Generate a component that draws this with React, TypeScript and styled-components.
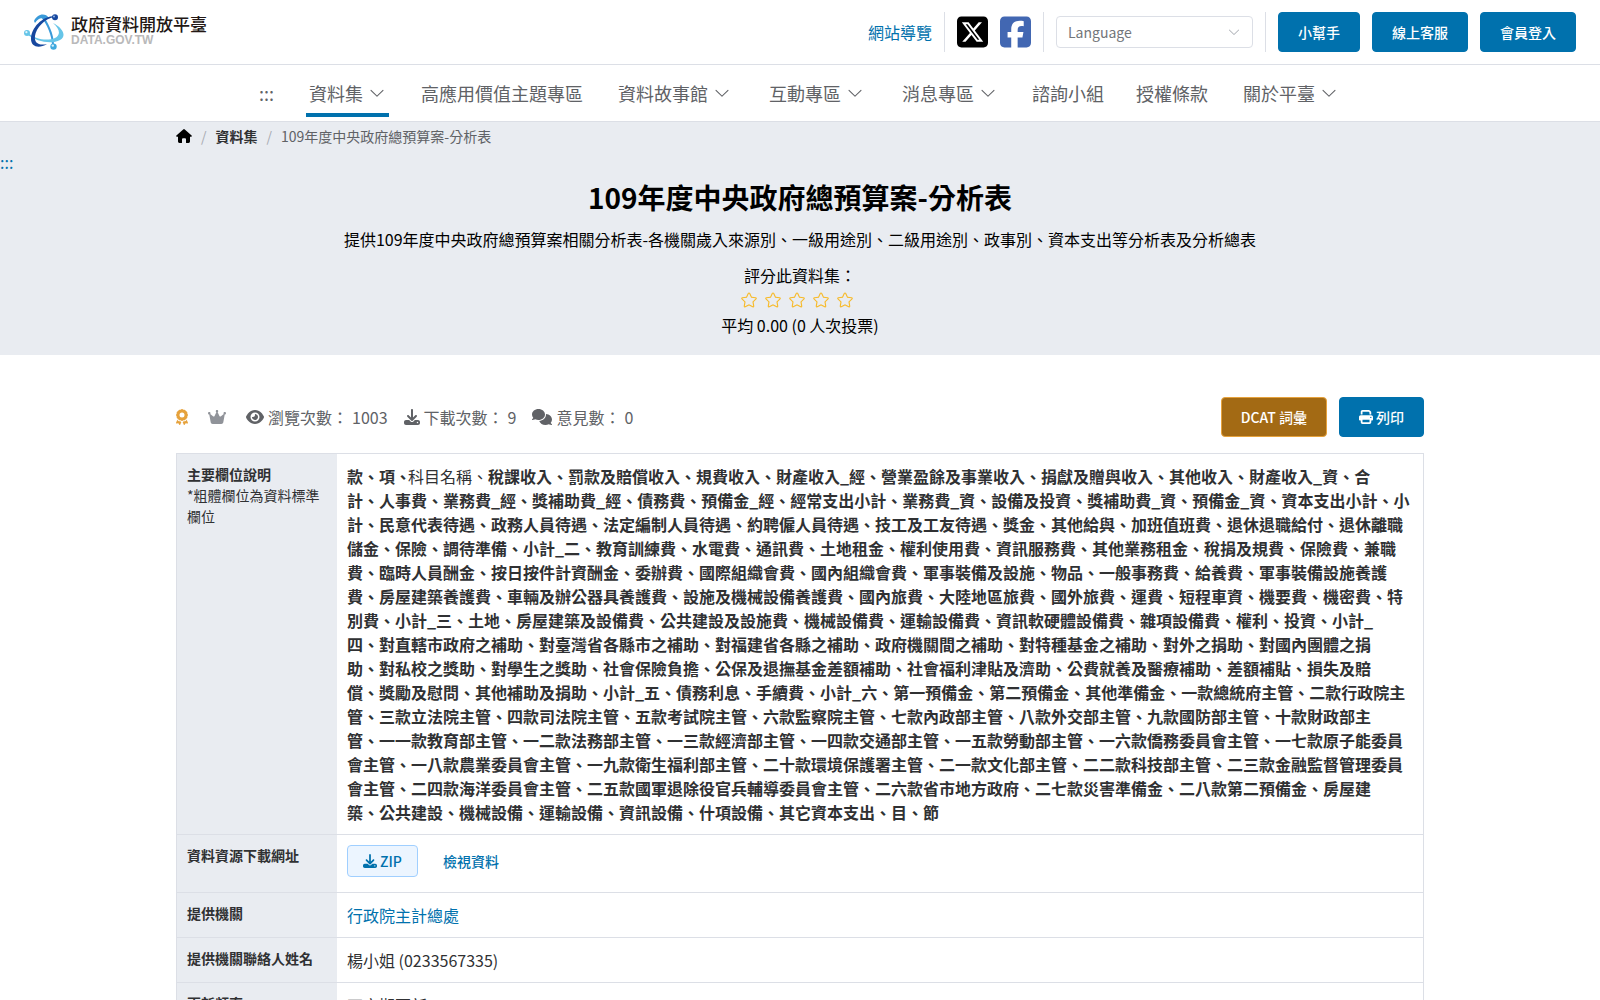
import React from 'react';
import styled, { createGlobalStyle, css } from 'styled-components';
import {
  FaSquareXTwitter,
  FaSquareFacebook,
  FaAward,
  FaCrown,
  FaEye,
  FaDownload,
  FaComments,
  FaPrint,
} from 'react-icons/fa6';

const color = {
  primary: '#0071ad',
  border: '#dcdfe6',
  panel: '#e9ecf1',
  text: '#303133',
  muted: '#606266',
  faint: '#909399',
  warning: '#e6a23c',
};

const GlobalStyle = createGlobalStyle`
  *, *::before, *::after { box-sizing: border-box; }
  body {
    margin: 0;
    background: #fff;
    color: #000;
    font: 16px/24px "Noto Sans CJK TC", "Noto Sans", sans-serif;
  }
  a { color: ${color.primary}; text-decoration: none; }
  button, select { font-family: inherit; cursor: pointer; }
  svg { display: block; flex: none; }
`;

const Page = styled.div`
  height: 100vh;
  overflow: hidden;
`;

const Header = styled.header`
  display: flex;
  align-items: center;
  justify-content: space-between;
  height: 65px;
  padding: 0 24px;
  border-bottom: 1px solid ${color.border};
`;

const Logo = styled.a`
  display: flex;
  align-items: center;
  gap: 6px;
`;

const LogoText = styled.span`
  display: flex;
  flex-direction: column;
  padding-bottom: 3px;
`;

const LogoName = styled.span`
  font-size: 17px;
  line-height: 18px;
  font-weight: 500;
  color: #231815;
`;

const LogoDomain = styled.span`
  font: bold 12px/14px "Liberation Sans", Arial, sans-serif;
  color: #b9b9ba;
`;

const Tools = styled.div`
  display: flex;
  align-items: center;
  gap: 12px;
`;

const Divider = styled.span`
  width: 1px;
  height: 40px;
  background: ${color.border};
`;

const SocialLink = styled.a<{ $tint: string }>`
  color: ${(p) => p.$tint};
  svg { width: 31px; height: 36px; }
`;

const SelectBox = styled.label`
  position: relative;
  display: block;
  svg {
    position: absolute;
    right: 12px;
    top: 9px;
    pointer-events: none;
    color: #a8abb2;
  }
`;

const LanguageSelect = styled.select`
  display: block;
  width: 197px;
  height: 32px;
  padding: 0 30px 0 11px;
  appearance: none;
  border: 1px solid ${color.border};
  border-radius: 4px;
  background: #fff;
  font-size: 14px;
  color: #73767a;
`;

const buttonKinds = {
  primary: css`
    background: ${color.primary};
    border-color: ${color.primary};
    color: #fff;
  `,
  warning: css`
    background: #a36a14;
    border-color: ${color.warning};
    color: #fff;
  `,
  plain: css`
    height: 32px;
    padding: 0 15px;
    background: #ecf5ff;
    border-color: #a0cfff;
    color: ${color.primary};
  `,
  text: css`
    height: 32px;
    padding: 0 15px;
    background: transparent;
    border-color: transparent;
    color: ${color.primary};
  `,
};

const Button = styled.button<{ $kind: keyof typeof buttonKinds }>`
  display: inline-flex;
  align-items: center;
  justify-content: center;
  gap: 3px;
  height: 40px;
  padding: 0 19px;
  border: 1px solid;
  border-radius: 4px;
  font-size: 14px;
  font-weight: 500;
  line-height: 14px;
  ${(p) => buttonKinds[p.$kind]}
`;

const Nav = styled.nav`
  display: flex;
  align-items: flex-start;
  justify-content: center;
  gap: 32px;
  height: 57px;
  padding-top: 15px;
  border-bottom: 1px solid ${color.border};
`;

const NavLink = styled.a<{ $menu?: boolean; $active?: boolean }>`
  display: flex;
  align-items: center;
  gap: 5px;
  height: 37px;
  padding: 0 ${(p) => (p.$menu ? '3px' : '0')} 7px;
  border-bottom: 4px solid ${(p) => (p.$active ? color.primary : 'transparent')};
  font-size: 18px;
  line-height: 26px;
  color: ${color.muted};
`;

const Hero = styled.section`
  padding-bottom: 18px;
  background: ${color.panel};
`;

const Container = styled.div`
  width: 78%;
  margin: 0 auto;
`;

const Breadcrumb = styled.nav`
  display: flex;
  align-items: center;
  gap: 9px;
  height: 28px;
  font-size: 14px;
  color: ${color.muted};
`;

const Slash = styled.span`
  color: #a8abb2;
`;

const CrumbLink = styled.a`
  font-weight: 700;
  color: ${color.text};
`;

const SkipLink = styled.a`
  display: block;
  width: max-content;
`;

const Intro = styled.div`
  display: flex;
  flex-direction: column;
  align-items: center;
  text-align: center;
`;

const Title = styled.h1`
  margin: 2px 0 9px;
  font-size: 28px;
  line-height: 42px;
  font-weight: 700;
`;

const Summary = styled.p`
  margin: 0 0 12px;
`;

const Stars = styled.div`
  display: flex;
  margin: 1px 0;
`;

const StarButton = styled.button`
  width: 24px;
  height: 24px;
  padding: 3px 6px 3px 0;
  border: 0;
  background: none;
  color: #f7ba2a;
`;

const Toolbar = styled.div`
  display: flex;
  align-items: center;
  justify-content: space-between;
  padding: 42px 0 16px;
`;

const Stats = styled.div`
  display: flex;
  align-items: center;
  gap: 16px;
  color: ${color.muted};
`;

const Marks = styled.div`
  display: flex;
  align-items: center;
  gap: 20px;
  margin-right: 4px;
`;

const Stat = styled.span`
  display: flex;
  align-items: center;
  gap: 4px;
`;

const IconBox = styled.span<{ $w: number; $tint?: string }>`
  color: ${(p) => p.$tint || 'inherit'};
  svg { width: ${(p) => p.$w}px; height: 16px; }
`;

const Actions = styled.div`
  display: flex;
  gap: 12px;
`;

const Table = styled.table`
  width: 100%;
  border: 1px solid ${color.border};
  border-spacing: 0;
  color: ${color.text};
  th, td {
    padding: 10px;
    border-bottom: 1px solid ${color.border};
    text-align: left;
    vertical-align: top;
  }
  th {
    width: 160px;
    background: ${color.panel};
    font-size: 14px;
    line-height: 21px;
    font-weight: 700;
  }
`;

const Note = styled.div`
  font-weight: 400;
`;

const KeyFields = styled.b`
  margin-right: -3px;
`;

const Downloads = styled.div`
  display: flex;
  gap: 9px;
  padding-bottom: 5px;
`;

const Chevron = ({ size = 18 }: { size?: number }) => (
  <svg width={size} height={size} viewBox="0 0 1024 1024" fill="currentColor" aria-hidden="true">
    <path d="M831.872 340.864 512 652.672 192.128 340.864a30.592 30.592 0 0 0-42.752 0 29.12 29.12 0 0 0 0 41.6L489.664 714.24a32 32 0 0 0 44.672 0l340.288-331.712a29.12 29.12 0 0 0 0-41.728 30.592 30.592 0 0 0-42.752 0z" />
  </svg>
);

const StarIcon = () => (
  <svg width="18" height="18" viewBox="0 0 1024 1024" fill="currentColor" aria-hidden="true">
    <path d="m512 747.84 228.16 119.936a6.4 6.4 0 0 0 9.28-6.72l-43.52-254.08 184.512-179.904a6.4 6.4 0 0 0-3.52-10.88l-255.104-37.12L517.76 147.904a6.4 6.4 0 0 0-11.52 0L392.192 379.072l-255.104 37.12a6.4 6.4 0 0 0-3.52 10.88L318.08 606.976l-43.584 254.08a6.4 6.4 0 0 0 9.28 6.72L512 747.84zM313.6 924.48a70.4 70.4 0 0 1-102.144-74.24l37.888-220.928L88.96 472.96A70.4 70.4 0 0 1 128 352.896l221.76-32.256 99.2-200.96a70.4 70.4 0 0 1 126.208 0l99.2 200.96 221.824 32.256a70.4 70.4 0 0 1 39.04 120.064L774.72 629.376l37.888 220.928a70.4 70.4 0 0 1-102.144 74.24L512 820.096l-198.4 104.32z" />
  </svg>
);

const HomeIcon = () => (
  <svg width="16" height="16" viewBox="0 0 16 16" fill="#000" aria-hidden="true">
    <path d="M7.2 1.4Q8 .8 8.8 1.4L15.6 7.4Q16.1 8 15.6 8.5 15.3 8.8 14.9 8.8H14V13.6Q14 15 12.6 15H10.6Q10 15 10 14.4V11.2Q10 10.2 9 10.2H7Q6 10.2 6 11.2V14.4Q6 15 5.4 15H3.4Q2 15 2 13.6V8.8H1.1Q.7 8.8.4 8.5-.1 8 .4 7.4Z" />
  </svg>
);

const LogoMark = () => (
  <svg width="41" height="36" viewBox="0 0 41 36" aria-hidden="true">
    <path d="M10 7C13 0 21-2 25 4L21 5.5C18 3 14 4 11 9Z" fill="#3a9ad9" />
    <path d="M19 2C24 8 30 20 30 31L28 31C28 22 23 10 17 3Z" fill="#3a9ad9" />
    <path d="M4 19C12 26 24 27 31 24 37 21 36 15 29 9 39 14 43 22 36 26 27 31 12 27 4 21Z" fill="#66c5e8" />
    <path d="M31 3C21 4 12 14 11 22 10 29 15 32 23 30 15 35 7 33 7 25 7 14 18 2 31 2Z" fill="#17479e" />
    <circle cx="31" cy="3.2" r="3" fill="#17479e" />
    <circle cx="3" cy="19" r="3" fill="#66c5e8" />
    <circle cx="29.5" cy="32.6" r="3.2" fill="#3fa9de" />
    <circle cx="30" cy="2.4" r="1" fill="#8fb4e4" />
    <circle cx="2.4" cy="18.2" r="1.1" fill="#e3f6fc" />
    <circle cx="28.8" cy="31.6" r="1.2" fill="#d8f0fa" />
  </svg>
);

const navItems = [
  { label: '資料集', menu: true, active: true },
  { label: '高應用價值主題專區' },
  { label: '資料故事館', menu: true },
  { label: '互動專區', menu: true },
  { label: '消息專區', menu: true },
  { label: '諮詢小組' },
  { label: '授權條款' },
  { label: '關於平臺', menu: true },
];

const stats = [
  { icon: <FaEye />, w: 18, label: '瀏覽次數：', value: 1003 },
  { icon: <FaDownload />, w: 16, label: '下載次數：', value: 9 },
  { icon: <FaComments />, w: 20, label: '意見數：', value: 0 },
];

const fields =
  '稅課收入、罰款及賠償收入、規費收入、財產收入_經、營業盈餘及事業收入、捐獻及贈與收入、其他收入、財產收入_資、合計、人事費、業務費_經、獎補助費_經、債務費、預備金_經、經常支出小計、業務費_資、設備及投資、獎補助費_資、預備金_資、資本支出小計、小計、民意代表待遇、政務人員待遇、法定編制人員待遇、約聘僱人員待遇、技工及工友待遇、獎金、其他給與、加班值班費、退休退職給付、退休離職儲金、保險、調待準備、小計_二、教育訓練費、水電費、通訊費、土地租金、權利使用費、資訊服務費、其他業務租金、稅捐及規費、保險費、兼職費、臨時人員酬金、按日按件計資酬金、委辦費、國際組織會費、國內組織會費、軍事裝備及設施、物品、一般事務費、給養費、軍事裝備設施養護費、房屋建築養護費、車輛及辦公器具養護費、設施及機械設備養護費、國內旅費、大陸地區旅費、國外旅費、運費、短程車資、機要費、機密費、特別費、小計_三、土地、房屋建築及設備費、公共建設及設施費、機械設備費、運輸設備費、資訊軟硬體設備費、雜項設備費、權利、投資、小計_四、對直轄市政府之補助、對臺灣省各縣市之補助、對福建省各縣之補助、政府機關間之補助、對特種基金之補助、對外之捐助、對國內團體之捐助、對私校之獎助、對學生之獎助、社會保險負擔、公保及退撫基金差額補助、社會福利津貼及濟助、公費就養及醫療補助、差額補貼、損失及賠償、獎勵及慰問、其他補助及捐助、小計_五、債務利息、手續費、小計_六、第一預備金、第二預備金、其他準備金、一款總統府主管、二款行政院主管、三款立法院主管、四款司法院主管、五款考試院主管、六款監察院主管、七款內政部主管、八款外交部主管、九款國防部主管、十款財政部主管、一一款教育部主管、一二款法務部主管、一三款經濟部主管、一四款交通部主管、一五款勞動部主管、一六款僑務委員會主管、一七款原子能委員會主管、一八款農業委員會主管、一九款衛生福利部主管、二十款環境保護署主管、二一款文化部主管、二二款科技部主管、二三款金融監督管理委員會主管、二四款海洋委員會主管、二五款國軍退除役官兵輔導委員會主管、二六款省市地方政府、二七款災害準備金、二八款第二預備金、房屋建築、公共建設、機械設備、運輸設備、資訊設備、什項設備、其它資本支出、目、節';

// A word joiner after each separator keeps it from ending a line.
const joined = fields.replace(/、/g, '、\u2060');

export default function App() {
  return (
    <Page lang="zh-TW">
      <GlobalStyle />
      <Header>
        <Logo href="#home">
          <LogoMark />
          <LogoText>
            <LogoName>政府資料開放平臺</LogoName>
            <LogoDomain>DATA.GOV.TW</LogoDomain>
          </LogoText>
        </Logo>
        <Tools>
          <a href="#sitemap">網站導覽</a>
          <Divider />
          <SocialLink href="#x" aria-label="X" $tint="#000">
            <FaSquareXTwitter />
          </SocialLink>
          <SocialLink href="#facebook" aria-label="Facebook" $tint="#4267b2">
            <FaSquareFacebook />
          </SocialLink>
          <Divider />
          <SelectBox>
            <LanguageSelect aria-label="Language" defaultValue="Language">
              <option>Language</option>
            </LanguageSelect>
            <Chevron size={14} />
          </SelectBox>
          <Divider />
          <Button $kind="primary">小幫手</Button>
          <Button $kind="primary">線上客服</Button>
          <Button $kind="primary">會員登入</Button>
        </Tools>
      </Header>

      <Nav aria-label="主選單">
        <NavLink href="#nav">:::</NavLink>
        {navItems.map((item) => (
          <NavLink key={item.label} href="#menu" $menu={item.menu} $active={item.active}>
            {item.label}
            {item.menu && <Chevron />}
          </NavLink>
        ))}
      </Nav>

      <Hero>
        <Container>
          <Breadcrumb aria-label="導覽路徑">
            <a href="#home" aria-label="首頁">
              <HomeIcon />
            </a>
            <Slash>/</Slash>
            <CrumbLink href="#datasets">資料集</CrumbLink>
            <Slash>/</Slash>
            <span>109年度中央政府總預算案-分析表</span>
          </Breadcrumb>
        </Container>
        <SkipLink href="#main">:::</SkipLink>
        <Intro>
          <Title>109年度中央政府總預算案-分析表</Title>
          <Summary>
            提供109年度中央政府總預算案相關分析表-各機關歲入來源別、一級用途別、二級用途別、政事別、資本支出等分析表及分析總表
          </Summary>
          <div>評分此資料集：</div>
          <Stars>
            {[1, 2, 3, 4, 5].map((n) => (
              <StarButton key={n} aria-label={`${n} 分`}>
                <StarIcon />
              </StarButton>
            ))}
          </Stars>
          <div>平均 0.00 (0 人次投票)</div>
        </Intro>
      </Hero>

      <Container as="main">
        <Toolbar>
          <Stats>
            <Marks>
              <IconBox $w={12} $tint={color.warning}>
                <FaAward />
              </IconBox>
              <IconBox $w={18} $tint={color.faint}>
                <FaCrown />
              </IconBox>
            </Marks>
            {stats.map((s) => (
              <Stat key={s.label}>
                <IconBox $w={s.w}>{s.icon}</IconBox>
                <span>{s.label}</span>
                <span>{s.value}</span>
              </Stat>
            ))}
          </Stats>
          <Actions>
            <Button $kind="warning">DCAT 詞彙</Button>
            <Button $kind="primary">
              <FaPrint />
              列印
            </Button>
          </Actions>
        </Toolbar>

        <Table>
          <tbody>
            <tr>
              <th scope="row">
                主要欄位說明
                <Note>*粗體欄位為資料標準欄位</Note>
              </th>
              <td>
                <KeyFields>款、項、</KeyFields>科目名稱、<b>{joined}</b>
              </td>
            </tr>
            <tr>
              <th scope="row">資料資源下載網址</th>
              <td>
                <Downloads>
                  <Button $kind="plain">
                    <FaDownload />
                    ZIP
                  </Button>
                  <Button $kind="text">檢視資料</Button>
                </Downloads>
              </td>
            </tr>
            <tr>
              <th scope="row">提供機關</th>
              <td>
                <a href="#agency">行政院主計總處</a>
              </td>
            </tr>
            <tr>
              <th scope="row">提供機關聯絡人姓名</th>
              <td>楊小姐 (0233567335)</td>
            </tr>
            <tr>
              <th scope="row">更新頻率</th>
              <td>不定期更新</td>
            </tr>
          </tbody>
        </Table>
      </Container>
    </Page>
  );
}
